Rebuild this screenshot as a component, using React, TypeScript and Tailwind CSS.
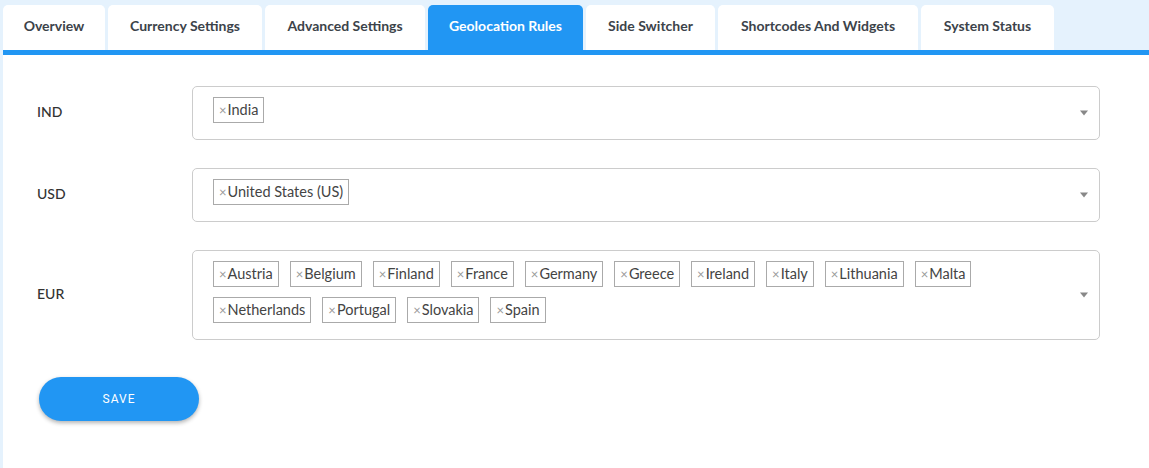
import React from 'react';

const tabs = [
  { name: 'Overview', w: 'w-[102px]' },
  { name: 'Currency Settings', w: 'w-[154px]' },
  { name: 'Advanced Settings', w: 'w-[160px]' },
  { name: 'Geolocation Rules', w: 'w-[155px]', active: true },
  { name: 'Side Switcher', w: 'w-[129px]' },
  { name: 'Shortcodes And Widgets', w: 'w-[200px]' },
  { name: 'System Status', w: 'w-[133px]' },
];

const rules = [
  { code: 'IND', countries: ['India'] },
  { code: 'USD', countries: ['United States (US)'] },
  {
    code: 'EUR',
    countries: [
      'Austria', 'Belgium', 'Finland', 'France', 'Germany', 'Greece', 'Ireland', 'Italy',
      'Lithuania', 'Malta', 'Netherlands', 'Portugal', 'Slovakia', 'Spain',
    ],
  },
];

function Chip({ label }: { label: string }) {
  return (
    <span className="flex items-center h-[26px] px-[5px] border border-[#aaa] bg-white text-[14.5px] text-[#444] leading-none">
      <span className="text-[#999] mr-[1px] text-[13px]">×</span>
      {label}
    </span>
  );
}

export default function App() {
  return (
    <div className="w-[1149px] h-[468px] bg-[#e5f2fd] pl-[3px] pt-[5px] overflow-hidden" style={{ fontFamily: 'Lato, "Open Sans", sans-serif' }}>
      {/* tabs */}
      <div className="flex gap-[3px] h-[45px]">
        {tabs.map(t => (
          <div
            key={t.name}
            className={`${t.w} flex items-center justify-center pb-[4px] rounded-t-[5px] text-[14px] font-bold ${
              t.active ? 'bg-[#2196f3] text-white' : 'bg-white text-[#3c434a]'
            }`}
          >
            {t.name}
          </div>
        ))}
      </div>
      <div className="h-[5px] bg-[#2196f3]" />

      {/* panel */}
      <div className="bg-white h-[420px] pl-[34px] pt-[31px]">
        <div className="flex flex-col gap-[28px]">
          {rules.map(r => (
            <div key={r.code} className="flex items-center">
              <div className="w-[155px] pb-[3px] text-[14px] font-medium text-[#333]">{r.code}</div>
              <div className="relative w-[908px] min-h-[54px] border border-[#ccc] rounded-[5px] pl-[20px] pr-[40px] pt-[10px] pb-[16px]">
                <div className="flex flex-wrap gap-x-[11px] gap-y-[10px]">
                  {r.countries.map(c => (
                    <Chip key={c} label={c} />
                  ))}
                </div>
                <span className="absolute right-[11px] top-1/2 -translate-y-1/2 w-0 h-0 border-l-[4px] border-r-[4px] border-t-[5px] border-l-transparent border-r-transparent border-t-[#888]" />
              </div>
            </div>
          ))}
        </div>
        <button
          className="mt-[37px] ml-[2px] w-[160px] h-[44px] rounded-full bg-[#2196f3] text-white text-[12px] tracking-[1px] shadow-[0_2px_4px_rgba(0,0,0,0.3)]"
          style={{ fontFamily: 'Roboto, sans-serif' }}
        >
          SAVE
        </button>
      </div>
    </div>
  );
}
